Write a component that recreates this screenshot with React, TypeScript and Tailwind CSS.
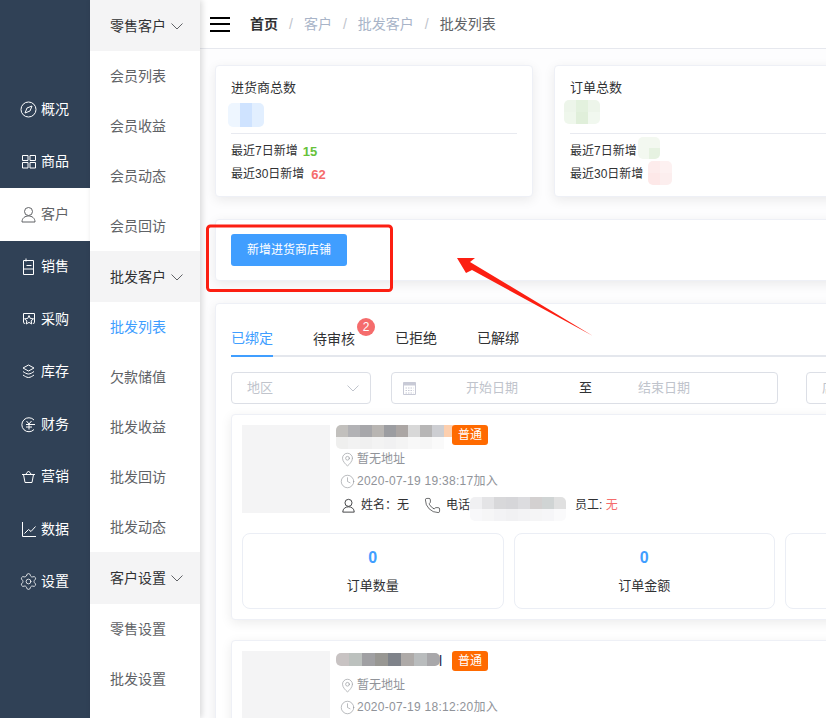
import type { ReactNode } from 'react';
import { MapPin, Clock, Phone, Settings } from 'lucide-react';

const FONT = 'font-["Liberation_Sans","Noto_Sans_CJK_SC",sans-serif]';
const CARD_SHADOW = 'shadow-[0_3px_12px_rgba(0,0,0,0.08)]';

function Ico({ children }: { children: ReactNode }) {
  return (
    <svg width="17" height="17" viewBox="0 0 17 17" fill="none" stroke="currentColor" strokeWidth="1">
      {children}
    </svg>
  );
}

function UserIcon({ size = 17 }: { size?: number }) {
  return (
    <svg width={size} height={size} viewBox="0 0 17 17" fill="none" stroke="currentColor" strokeWidth="1">
      <circle cx="8.5" cy="5.5" r="4" />
      <path d="M2 16c0-4 3-6 6.500-6s6.500 2 6.500 6z" />
    </svg>
  );
}

function Chevron({ className }: { className: string }) {
  return (
    <svg className={className} width="12" height="7" viewBox="0 0 12 7" fill="none" stroke="currentColor" strokeWidth="1">
      <path d="M.5.5L6 6 11.500.5" />
    </svg>
  );
}

const NAV: { label: string; icon: ReactNode; active?: boolean }[] = [
  {
    label: '概况',
    icon: (
      <Ico>
        <circle cx="8.5" cy="8.5" r="7.5" />
        <path d="M12 5l-2 5-5 2 2-5z" />
      </Ico>
    ),
  },
  {
    label: '商品',
    icon: (
      <Ico>
        <path d="M2.500 2.500h5.500v5H2.500zM10 2.500h5.500v5H10zM2.500 9.500h5.500v5.500H2.500zM10 9.500h5.500v5.500H10z" />
      </Ico>
    ),
  },
  { label: '客户', icon: <UserIcon />, active: true },
  {
    label: '销售',
    icon: (
      <Ico>
        <path d="M3.500 2.500h10v14h-10zM6 .5v3M6.500 7.500h5M3.500 11h10" />
      </Ico>
    ),
  },
  {
    label: '采购',
    icon: (
      <Ico>
        <path d="M4.500 13L3.500 11V2.500h11V11l-1 2" />
        <path d="M9 4.500l1.300 3 3.200.3-2.400 2.100.7 3.100L9 11.400 6.200 13l.7-3.100-2.400-2.100 3.200-.3z" />
      </Ico>
    ),
  },
  {
    label: '库存',
    icon: (
      <Ico>
        <path d="M3 5l5.500-3L14 5 8.500 8zM3 8.500c1.500 1 3.500 2.500 5.500 2.500s4-1.500 5.500-2.500M3 12c1.500 1 3.500 2.500 5.500 2.500S12.500 13 14 12" />
      </Ico>
    ),
  },
  {
    label: '财务',
    icon: (
      <Ico>
        <path d="M14 4a7 7 0 1 0 0 9.500M6.500 5l2.500 3 2.500-3M9 8v5.500M6 8.500h9M6 11h6" />
      </Ico>
    ),
  },
  {
    label: '营销',
    icon: (
      <Ico>
        <path d="M2 6.500h13M3.500 6.500l1.500 8h7l1.500-8M5.500 6.500L8.500 3l3 3.500" />
      </Ico>
    ),
  },
  {
    label: '数据',
    icon: (
      <Ico>
        <path d="M2.500 1v14.500H16M4.500 12.500l4-4 2.500 2 4.500-5" />
      </Ico>
    ),
  },
  { label: '设置', icon: <Settings size={19} strokeWidth={1} className="ml-[-1px]" /> },
];

const SUB: { title: string; head: string; items: string[] }[] = [
  { title: '零售客户', head: 'h-[51px]', items: ['会员列表', '会员收益', '会员动态', '会员回访'] },
  { title: '批发客户', head: 'h-[51px]', items: ['批发列表', '欠款储值', '批发收益', '批发回访', '批发动态'] },
  { title: '客户设置', head: 'h-[52px]', items: ['零售设置', '批发设置'] },
];

// blurred-out patches from the original screenshot
function Mosaic({ className, cell, rows }: { className: string; cell: number; rows: string[][] }) {
  return (
    <svg className={`absolute rounded-[5px] ${className}`} width={rows[0].length * cell} height={rows.length * cell}>
      {rows.map((r, y) => r.map((c, x) => <rect key={`${x}-${y}`} x={x * cell} y={y * cell} width={cell} height={cell} fill={c} />))}
    </svg>
  );
}

function Sidebar() {
  return (
    <aside className="flex w-[90px] shrink-0 flex-col bg-[#304156] pt-[83px]">
      {NAV.map((n) => (
        <div
          key={n.label}
          className={`flex h-[52.5px] items-center pl-[20px] text-[14px] ${n.active ? 'bg-white text-[#606266]' : 'text-white'}`}
        >
          <span className="flex w-[21px] justify-start">{n.icon}</span>
          <span>{n.label}</span>
        </div>
      ))}
    </aside>
  );
}

function SubMenu() {
  return (
    <nav className="z-10 w-[110px] shrink-0 bg-white shadow-[2px_0_6px_rgba(0,0,0,0.15)]">
      {SUB.map((g) => (
        <div key={g.title}>
          <div className={`flex items-center bg-[#f4f4f5] pl-[20px] pt-[1px] text-[14px] text-[#303133] ${g.head}`}>
            {g.title}
            <Chevron className="ml-[5px] text-[#606266]" />
          </div>
          {g.items.map((i) => (
            <div key={i} className={`flex h-[50px] items-center pl-[20px] text-[14px] ${i === '批发列表' ? 'text-[#409eff]' : 'text-[#606266]'}`}>
              {i}
            </div>
          ))}
        </div>
      ))}
    </nav>
  );
}

function Header() {
  return (
    <header className="flex h-[49px] items-center border-b border-[#e6e8ee] bg-white pl-[10px] text-[14px]">
      <div className="flex w-[20px] flex-col gap-[4.5px]">
        <i className="h-[2px] bg-black" />
        <i className="h-[2px] bg-black" />
        <i className="h-[2px] bg-black" />
      </div>
      <b className="ml-[20px] font-bold text-[#303133]">首页</b>
      <span className="mx-[11px] text-[#c0c4cc]">/</span>
      <span className="text-[#a8b4c8]">客户</span>
      <span className="mx-[11px] text-[#c0c4cc]">/</span>
      <span className="text-[#a8b4c8]">批发客户</span>
      <span className="mx-[11px] text-[#c0c4cc]">/</span>
      <span className="text-[#606266]">批发列表</span>
    </header>
  );
}

function StatCard({ title, week, month }: { title: string; week?: string; month?: string }) {
  return (
    <div className={`h-[132px] w-[318px] shrink-0 rounded border border-[#eef0f6] bg-white px-[15px] pt-[12px] ${CARD_SHADOW}`}>
      <div className="text-[13px] leading-[20px] text-[#303133]">{title}</div>
      <div className="mt-[35px] border-t border-[#e8eaf0] pt-[5.5px] text-[12px] leading-[23px] text-[#303133]">
        <div className="flex items-center">
          最近7日新增<b className="ml-[5px] text-[13px] text-[#67c23a]">{week}</b>
        </div>
        <div className="flex items-center">
          最近30日新增<b className="ml-[7px] text-[13px] text-[#f56c6c]">{month}</b>
        </div>
      </div>
    </div>
  );
}

function Metric({ value, label }: { value?: string; label?: string }) {
  return (
    <div className="flex h-[76px] w-[261.500px] shrink-0 flex-col items-center rounded-[8px] border border-[#ebeef5] pt-[14px]">
      <b className="h-[20px] text-[16px] leading-[20px] text-[#409eff]">{value}</b>
      <span className="mt-[8px] text-[13px] leading-[20px] text-[#303133]">{label}</span>
    </div>
  );
}

function CustomerCard({ time, full, tail }: { time: string; full?: boolean; tail?: string }) {
  return (
    <div className={`relative w-[640px] shrink-0 rounded border border-[#eef0f6] bg-white p-[10px] ${CARD_SHADOW}`}>
      <div className="flex">
        <div className="h-[88px] w-[88px] shrink-0 bg-[#f4f4f5]" />
        <div className="ml-[11px] min-w-0 flex-1 text-[12px]">
          <div className="flex h-[20px] items-center">
            <span className="w-[111px] pl-[98px] text-[14px] text-[#1a1f4a]">{tail}</span>
            <span className="relative z-10 flex h-[20px] w-[36px] items-center justify-center rounded-[3px] bg-[#ff6a00] text-white">普通</span>
          </div>
          <div className="mt-[3px] flex h-[22px] items-center text-[#909399]">
            <MapPin size={15} strokeWidth={1} className="ml-[-1px]" />
            <span className="ml-[2px]">暂无地址</span>
          </div>
          <div className="flex h-[22px] items-center text-[#909399]">
            <Clock size={15} strokeWidth={1} className="ml-[-1px]" />
            <span className="ml-[2px] tracking-[0.26px]">{time}加入</span>
          </div>
          {full && (
            <div className="mt-[1px] flex h-[24px] items-center text-[#303133]">
              <UserIcon size={15} />
              <span className="ml-[5px]">姓名：无</span>
              <Phone size={17} strokeWidth={1} className="ml-[15px]" />
              <span className="ml-[5px]">电话</span>
              <span className="ml-[105px]">
                员工: <span className="text-[#f56c6c]">无</span>
              </span>
            </div>
          )}
        </div>
      </div>
      {full && (
        <div className="mt-[16px] flex gap-[10px]">
          <Metric value="0" label="订单数量" />
          <Metric value="0" label="订单金额" />
          <Metric />
        </div>
      )}
    </div>
  );
}

function Filters() {
  return (
    <div className="mt-[15px] flex text-[13px] text-[#c0c4cc]">
      <div className="flex h-[32px] w-[140px] shrink-0 items-center justify-between rounded border border-[#dcdfe6] pl-[15px] pr-[11px]">
        地区
        <Chevron className="text-[#c0c4cc]" />
      </div>
      <div className="ml-[20px] flex h-[32px] w-[387px] shrink-0 items-center rounded border border-[#dcdfe6] pl-[11px]">
        <svg width="13" height="14" viewBox="0 0 13 14" fill="none" stroke="#c8cad6" strokeWidth="1">
          <path d="M.5 1.500h12v12H.5z" />
          <path d="M.5 3h12" strokeWidth="3" />
          <path d="M2.500 7h8M2.500 9.500h8M2.500 12h8" strokeDasharray="1.500 1" />
        </svg>
        <span className="ml-[50px]">开始日期</span>
        <span className="ml-[61px] text-[#303133]">至</span>
        <span className="ml-[46px]">结束日期</span>
      </div>
      <div className="ml-[28px] flex h-[32px] w-[140px] shrink-0 items-center rounded border border-[#dcdfe6] pl-[15px]">店</div>
    </div>
  );
}

export default function App() {
  return (
    <div className={`relative flex h-[718px] w-[826px] overflow-hidden bg-white ${FONT}`}>
      <Sidebar />
      <SubMenu />
      <main className="min-w-0 flex-1 overflow-hidden bg-[#fdfdfe]">
        <Header />
        <div className="flex gap-[21px] pl-[15px] pt-[16px]">
          <StatCard title="进货商总数" week="15" month="62" />
          <StatCard title="订单总数" />
        </div>
        <div className={`ml-[15px] mt-[22px] flex h-[62px] w-[640px] items-center rounded border border-[#eef0f6] bg-white pl-[15px] ${CARD_SHADOW}`}>
          <button className="h-[32px] w-[116px] rounded-[3px] bg-[#409eff] text-[12px] text-white">新增进货商店铺</button>
        </div>
        <div className={`ml-[15px] mt-[22px] w-[640px] rounded border border-[#eef0f6] bg-white px-[15px] pb-[20px] pt-[23px] ${CARD_SHADOW}`}>
          <div className="flex h-[30px] border-b-2 border-[#e4e7ed] text-[14px] text-[#303133]">
            <span className="mb-[-2px] h-[30px] w-[42px] border-b-2 border-[#409eff] leading-[22px] text-[#409eff]">已绑定</span>
            <span className="relative ml-[40px] leading-[24px]">
              待审核
              <span className="absolute left-[44px] top-[-9px] flex h-[18px] w-[18px] items-center justify-center rounded-full bg-[#f56c6c] text-[12px] text-white">2</span>
            </span>
            <span className="ml-[40px] leading-[22px]">已拒绝</span>
            <span className="ml-[40px] leading-[22px]">已解绑</span>
          </div>
          <Filters />
          <div className="mt-[10px] flex flex-col gap-[20px]">
            <CustomerCard time="2020-07-19 19:38:17" full />
            <CustomerCard time="2020-07-19 18:12:20" tail="l" />
          </div>
        </div>
      </main>

      {/* blurred patches */}
      <Mosaic className="left-[228px] top-[103px]" cell={12} rows={[['#eef6ff', '#cfe3ff', '#e2efff'], ['#eef6ff', '#cfe3ff', '#e2efff']]} />
      <Mosaic className="left-[564px] top-[100px]" cell={12} rows={[['#edf5ea', '#e3f1de', '#edf5ea'], ['#eff7ec', '#e0efda', '#f1f8ef']]} />
      <Mosaic className="left-[638px] top-[137px]" cell={11} rows={[['#f3f8f0', '#f3f8f0'], ['#f3f8f0', '#e6f2e1']]} />
      <Mosaic className="left-[648px] top-[161px]" cell={12} rows={[['#fdecec', '#fdf1f1'], ['#fde8e8', '#fceeee']]} />
      <Mosaic
        className="left-[336px] top-[425px]"
        cell={12}
        rows={[
          ['#c2c0bd', '#b2b2b5', '#a7a7aa', '#b8b5b2', '#9c9da1', '#aba6a4', '#d8d8d8', '#b7b6b6', '#cdced2', '#fdcfae'],
          ['#efefee', '#f2f2f2', '#f0f0f0', '#f3f3f3', '#f1f1f2', '#f4f4f4', '#f8f8f8', '#f6f6f6', '#fafafa', '#ffffff'],
        ]}
      />
      <Mosaic
        className="left-[470px] top-[497px]"
        cell={12}
        rows={[
          ['#f0f0f2', '#e4e4e6', '#d8d8da', '#d6d6d9', '#dcdcdf', '#d3d0d0', '#d0d4d4', '#e0e0e0'],
          ['#f8f8fa', '#f6f6f7', '#f3f3f5', '#f1f1f3', '#f3f3f5', '#f5f5f6', '#f6f6f8', '#fafafb'],
        ]}
      />
      <Mosaic
        className="left-[336px] top-[653px]"
        cell={13}
        rows={[['#c8c3c3', '#bcc1be', '#a0a0a3', '#989793', '#7f838a', '#aeaaa8', '#b9bcbd', '#a8a7aa']]}
      />

      {/* red annotation drawn over the page */}
      <svg className="absolute left-0 top-0" width="826" height="718" fill="none">
        <rect x="207.500" y="226" width="184" height="64.500" rx="3" stroke="#fc1f12" strokeWidth="3" />
        <path d="M457 258h18l-5 4 123 74-121-66-6 3z" fill="#fc1f12" />
      </svg>
    </div>
  );
}
